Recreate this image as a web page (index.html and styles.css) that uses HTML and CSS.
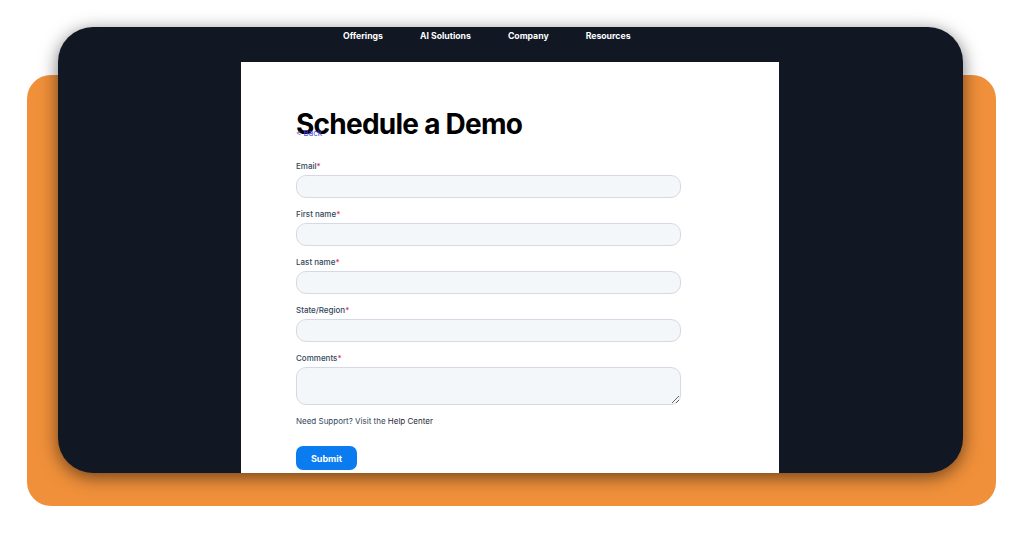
FILE: index.html
```html
<!DOCTYPE html>
<html lang="en">
<head>
<meta charset="utf-8">
<title>Schedule a Demo</title>
<link rel="stylesheet" href="styles.css">
</head>
<body>
<div class="stage">
  <div class="backdrop"></div>
  <div class="window">
    <nav class="topnav">
      <a href="#">Offerings</a>
      <a href="#">AI Solutions</a>
      <a href="#">Company</a>
      <a href="#">Resources</a>
    </nav>
    <main class="panel">
      <h1 class="title">Schedule a Demo</h1>
      <a class="back" href="#">&lt; Back</a>
      <form class="form">
        <label class="field">
          <span class="label">Email<em>*</em></span>
          <input class="input" type="email">
        </label>
        <label class="field">
          <span class="label">First name<em>*</em></span>
          <input class="input" type="text">
        </label>
        <label class="field">
          <span class="label">Last name<em>*</em></span>
          <input class="input" type="text">
        </label>
        <label class="field">
          <span class="label">State/Region<em>*</em></span>
          <input class="input" type="text">
        </label>
        <label class="field">
          <span class="label">Comments<em>*</em></span>
          <textarea class="input textarea"></textarea>
        </label>
        <p class="support">Need Support? Visit the <a href="#">Help Center</a></p>
        <button class="submit" type="button">Submit</button>
      </form>
    </main>
  </div>
</div>
</body>
</html>
```
FILE: styles.css
```css
html, body {
  margin: 0;
  padding: 0;
  background: #ffffff;
  font-family: Inter, "Liberation Sans", sans-serif;
}

.stage {
  display: grid;
  width: 1024px;
  height: 536px;
}

.backdrop,
.window {
  grid-area: 1 / 1;
}

.backdrop {
  margin: 75px 0 0 27px;
  width: 969px;
  height: 431px;
  background: #f0903a;
  border-radius: 24px;
}

.window {
  margin: 27px 0 0 58px;
  width: 905px;
  height: 446px;
  background: #111723;
  border-radius: 35px;
  overflow: hidden;
  display: flex;
  flex-direction: column;
  box-shadow: 0 4px 18px rgba(0, 0, 0, 0.55);
  position: relative;
  z-index: 1;
}

.topnav {
  height: 35px;
  display: flex;
  align-items: flex-start;
  gap: 37px;
  padding: 4px 0 0 285px;
  box-sizing: border-box;
}

.topnav a {
  color: #ffffff;
  text-decoration: none;
  font-size: 8.7px;
  line-height: 11px;
  font-weight: 700;
}

.panel {
  margin-left: 183px;
  width: 538px;
  flex: 1;
  background: #ffffff;
  padding: 48px 98px 0 55px;
  box-sizing: border-box;
}

.title {
  margin: 0;
  font-size: 28px;
  line-height: 28px;
  font-weight: 700;
  letter-spacing: -0.75px;
  color: #000000;
}

.back {
  display: block;
  margin: -10px 0 23px;
  font-size: 8px;
  line-height: 10px;
  color: #4f46e5;
  text-decoration: none;
}

.form {
  display: flex;
  flex-direction: column;
  margin: 0;
}

.field {
  display: flex;
  flex-direction: column;
  gap: 4px;
  margin-bottom: 11px;
}

.label {
  font-size: 8px;
  line-height: 10px;
  font-weight: 500;
  color: #33475b;
}

.label em {
  font-style: normal;
  color: #e0284a;
}

.input {
  width: 385px;
  height: 23px;
  box-sizing: border-box;
  margin: 0;
  background: #f4f7fa;
  border: 1px solid #d3dae3;
  border-radius: 10px;
  font: inherit;
}

.textarea {
  height: 38px;
  resize: vertical;
  border-radius: 10px;
}

.support {
  margin: 0 0 20px;
  font-size: 8px;
  line-height: 10px;
  color: #33475b;
}

.support a {
  color: #1f2a3a;
  text-decoration: none;
}

.submit {
  width: 61px;
  height: 24px;
  padding: 0;
  border: 0;
  border-radius: 7px;
  background: #0b7bf0;
  color: #ffffff;
  font-family: inherit;
  font-size: 9px;
  font-weight: 700;
}
```
